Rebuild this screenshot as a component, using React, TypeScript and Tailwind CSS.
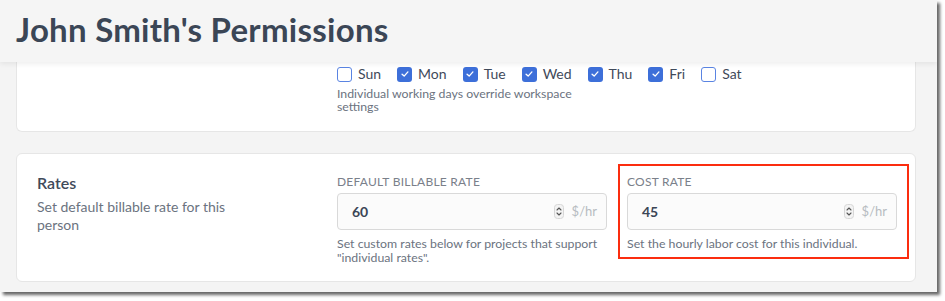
import React from "react";

const days = [
  { label: "Sun", checked: false },
  { label: "Mon", checked: true },
  { label: "Tue", checked: true },
  { label: "Wed", checked: true },
  { label: "Thu", checked: true },
  { label: "Fri", checked: true },
  { label: "Sat", checked: false },
];

function DayCheckbox({ label, checked }: { label: string; checked: boolean }) {
  return (
    <label className="flex items-center gap-[6px]">
      {checked ? (
        <span className="flex h-[15px] w-[15px] items-center justify-center rounded-[3px] bg-[#3d6fd9]">
          <svg viewBox="0 0 12 12" className="h-[10px] w-[10px]" fill="none">
            <path
              d="M2.5 6.2 L5 8.5 L9.5 3.5"
              stroke="white"
              strokeWidth="1.6"
              strokeLinecap="round"
              strokeLinejoin="round"
            />
          </svg>
        </span>
      ) : (
        <span className="h-[15px] w-[15px] rounded-[3px] border border-[#5a84e2] bg-white" />
      )}
      <span className="text-[14px] leading-[16px] text-[#3f4a5a]">{label}</span>
    </label>
  );
}

function Spinner() {
  return (
    <svg viewBox="0 0 10 15" className="h-[15px] w-[10px]" fill="none">
      <rect x="0.5" y="0.5" width="9" height="14" rx="3" fill="#f3f3f3" stroke="#d6d6d6" />
      <path d="M3 6 L5 4 L7 6" stroke="#555" strokeWidth="1.1" strokeLinecap="round" strokeLinejoin="round" />
      <path d="M3 9 L5 11 L7 9" stroke="#555" strokeWidth="1.1" strokeLinecap="round" strokeLinejoin="round" />
    </svg>
  );
}

function RateField({
  label,
  value,
  help,
}: {
  label: string;
  value: string;
  help: React.ReactNode;
}) {
  return (
    <div className="flex w-[270px] flex-col">
      <p className="mb-[3px] text-[12px] leading-[16px] tracking-[0.02em] text-[#7a808a]">
        {label}
      </p>
      <div className="flex h-[37px] items-center rounded-[4px] border border-[#d9d9d9] bg-[#fbfbfb] pl-[14px] pr-[9px]">
        <span className="flex-1 text-[14px] font-bold text-[#3b4656]">{value}</span>
        <Spinner />
        <span className="ml-[8px] text-[13px] text-[#b7bbc1]">$/hr</span>
      </div>
      <p className="mt-[7px] text-[12.3px] leading-[14px] text-[#6b7380]">{help}</p>
    </div>
  );
}

export default function App() {
  return (
    <div
      className="h-[301px] w-[945px] bg-white"
      style={{ fontFamily: "Lato, 'Open Sans', sans-serif" }}
    >
      <div className="flex h-[292px] w-[937px] flex-col overflow-hidden bg-[#f4f4f4] shadow-[3px_3px_3px_rgba(0,0,0,0.6)]">
        <header className="relative z-10 h-[62px] shrink-0 bg-[#f5f5f5] px-4 pt-[5px] shadow-[0_2px_5px_rgba(0,0,0,0.07)]">
          <h1 className="text-[33px] font-bold leading-[48px] tracking-[0.008em] text-[#3b4656]">
            John Smith's Permissions
          </h1>
        </header>

        <div className="flex flex-col gap-[21px] px-4">
          <section className="flex h-[70px] w-[900px] rounded-b-md border border-t-0 border-[#e6e6e6] bg-white pl-5 pt-[4px]">
            <div className="w-[300px]" />
            <div className="flex flex-col">
              <div className="flex gap-4">
                {days.map((d) => (
                  <DayCheckbox key={d.label} label={d.label} checked={d.checked} />
                ))}
              </div>
              <p className="mt-[5px] w-[250px] text-[12.3px] leading-[13px] text-[#6b7380]">
                Individual working days override workspace settings
              </p>
            </div>
          </section>

          <section className="flex h-[129px] w-[900px] rounded-md border border-[#e6e6e6] bg-white pl-5 pt-[20px]">
            <div className="w-[300px]">
              <h2 className="text-[16px] font-semibold leading-[18px] text-[#3f4a5a]">Rates</h2>
              <p className="mt-[6px] w-[215px] text-[14px] leading-[18px] text-[#6b7380]">
                Set default billable rate for this person
              </p>
            </div>
            <div className="flex gap-[20px]">
              <RateField
                label="DEFAULT BILLABLE RATE"
                value="60"
                help={<>Set custom rates below for projects that support "individual rates".</>}
              />
              <div className="relative">
                <RateField
                  label="COST RATE"
                  value="45"
                  help="Set the hourly labor cost for this individual."
                />
                <div className="pointer-events-none absolute left-[-9px] right-[-12px] top-[-10px] h-[95px] border-[2.5px] border-[#fb2d0f]" />
              </div>
            </div>
          </section>
        </div>
      </div>
    </div>
  );
}
